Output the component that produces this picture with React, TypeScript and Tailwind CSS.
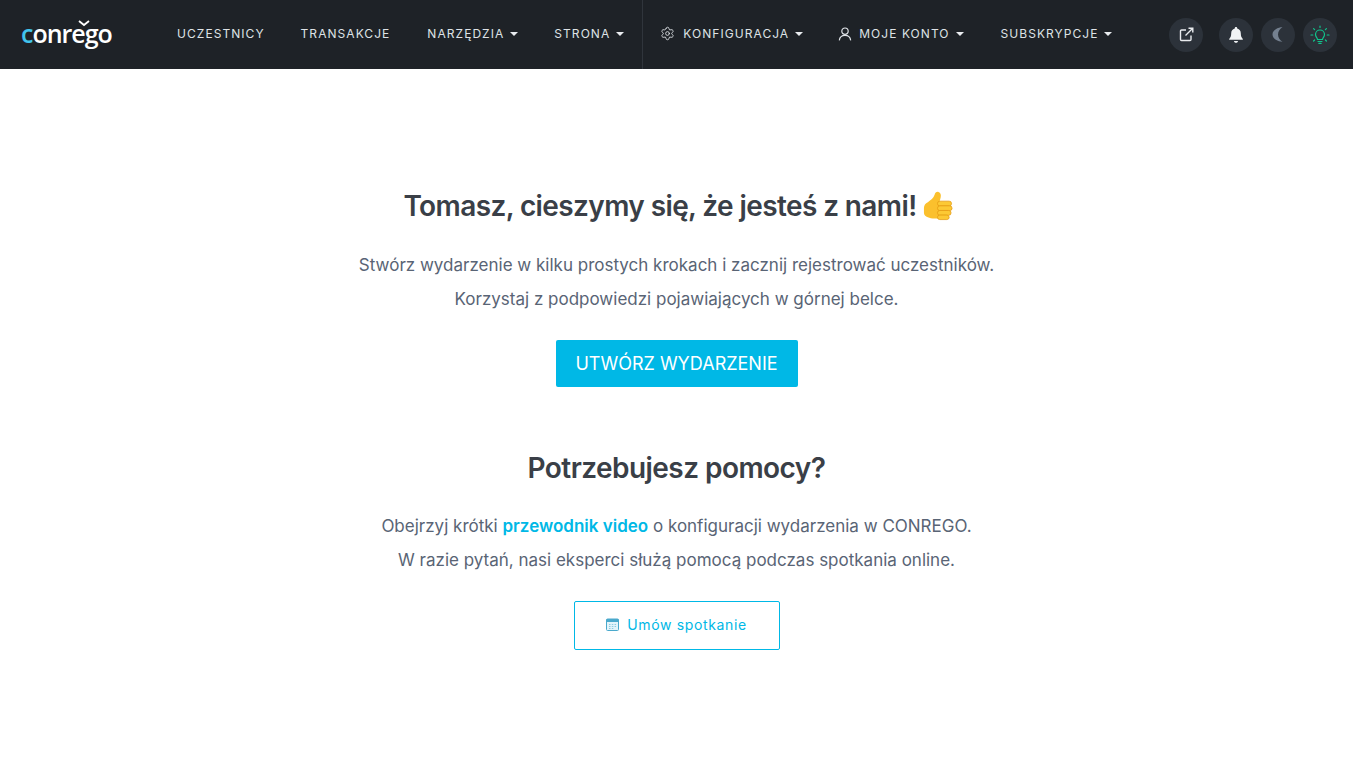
import React from 'react';
import { Settings } from 'lucide-react';

function Caret() {
  return <span className="ml-[6px] inline-block border-x-[4px] border-t-[4px] border-x-transparent border-t-[#e9ecef]" />;
}

function NavItem({ label, caret, icon, className }: { label: string; caret?: boolean; icon?: React.ReactNode; className?: string }) {
  return (
    <a className={`flex items-center pb-[2px] text-[12px] font-normal tracking-[1.05px] text-[#dee2e6] ${className || ''}`}>
      {icon}
      <span>{label}</span>
      {caret && <Caret />}
    </a>
  );
}

function RoundButton({ children, className }: { children: React.ReactNode; className?: string }) {
  return (
    <button className={`flex h-[34px] w-[34px] items-center justify-center rounded-full bg-[#2c323a] ${className || ''}`}>
      {children}
    </button>
  );
}

function ThumbsUp() {
  return (
    <svg width="31" height="32" viewBox="0 0 32 32" className="ml-[5px]">
      <path d="M2 18c0-3 1.500-4.500 4-6 3-2 6-4 7-7.500C13.500 2.500 15 1 17 1.500c2.300.6 2.800 3 2.300 5.500L18 12v17h-5c-3 0-5-1-7-1.500-2.500-.6-4-2-4-4.500z" fill="#fbc02d" />
      <rect x="16" y="11" width="14.500" height="5" rx="2.500" fill="#fcc934" stroke="#e59a12" strokeWidth="0.800" />
      <rect x="16" y="15.800" width="15" height="5" rx="2.500" fill="#fcc934" stroke="#e59a12" strokeWidth="0.800" />
      <rect x="16" y="20.600" width="14" height="5" rx="2.500" fill="#fcc934" stroke="#e59a12" strokeWidth="0.800" />
      <rect x="16" y="25.400" width="12" height="4.600" rx="2.300" fill="#fcc934" stroke="#e59a12" strokeWidth="0.800" />
    </svg>
  );
}

export default function App() {
  return (
    <div className="min-h-[772px] bg-white font-['Inter',sans-serif]">
      {/* górny pasek */}
      <header className="flex h-[69px] items-center bg-[#1e2227] pl-[21px] pr-[16px]">
        <div className="relative flex w-[156px] items-center">
          <span className="pb-[2px] font-['Open_Sans',sans-serif] text-[25px] font-semibold leading-none tracking-[-1px] text-white">
            <span className="text-[#41c4ec]">c</span>onrego
          </span>
          <svg width="12" height="7" viewBox="0 0 12 7" className="absolute left-[57px] top-[-1px]">
            <path d="M1 1l5 4 5-4" stroke="#fff" strokeWidth="1.800" fill="none" />
          </svg>
        </div>
        <nav className="flex h-full items-center">
          <NavItem label="UCZESTNICY" className="mr-[36px]" />
          <NavItem label="TRANSAKCJE" className="mr-[37px]" />
          <NavItem label="NARZĘDZIA" caret className="mr-[36px]" />
          <NavItem label="STRONA" caret className="mr-[18px]" />
          <div className="mr-[17px] h-full w-px bg-[#30353c]" />
          <NavItem label="KONFIGURACJA" caret className="mr-[35px]" icon={<Settings size={15} strokeWidth={1.4} className="mr-[8px]" />} />
          <NavItem
            label="MOJE KONTO"
            caret
            className="mr-[37px]"
            icon={
              <svg width="14" height="14" viewBox="0 0 14 14" fill="none" stroke="currentColor" strokeWidth="1.200" className="mr-[7px]">
                <circle cx="7" cy="4.200" r="3.200" />
                <path d="M1.300 13.300c.4-3 2.600-5 5.700-5s5.300 2 5.700 5" />
              </svg>
            }
          />
          <NavItem label="SUBSKRYPCJE" caret />
        </nav>
        <div className="ml-auto flex items-center">
          <RoundButton className="mr-[16px]">
            <svg width="15" height="15" viewBox="0 0 15 15" fill="none" stroke="#e9ecef" strokeWidth="1.400">
              <path d="M7 3H2.500A1 1 0 0 0 1.500 4v8.500a1 1 0 0 0 1 1H11a1 1 0 0 0 1-1V8.500" />
              <path d="M9.500 1.200h4.300v4.300M13.500 1.500L6.500 8.500" />
            </svg>
          </RoundButton>
          <RoundButton className="mr-[8px]">
            <svg width="14" height="16" viewBox="0 0 14 16" fill="#f1f3f5">
              <path d="M7 0c.7 0 1.200.5 1.200 1.200v.4C10.500 2.200 11.800 4 11.800 6.300c0 3 .7 4.200 2 5.700.2.300 0 .8-.4.800H.6c-.4 0-.6-.5-.4-.8 1.300-1.500 2-2.700 2-5.700C2.200 4 3.500 2.200 5.800 1.600v-.4C5.800.5 6.300 0 7 0z" />
              <path d="M5 14h4c0 1-.9 1.800-2 1.800S5 15 5 14z" />
            </svg>
          </RoundButton>
          <RoundButton className="mr-[8px]">
            <svg width="12" height="15" viewBox="0 0 12 15" fill="#74808f">
              <path d="M10.500 0.300C6 .3 .5 3 .5 7.500s5.500 7.200 10 7.200c-2.500-1.500-4.500-4-4.500-7.200S8 1.800 10.500.3z" />
            </svg>
          </RoundButton>
          <RoundButton>
            <svg width="20" height="20" viewBox="0 0 20 20" fill="none" stroke="#10c48c" strokeWidth="1.200" strokeLinecap="round">
              <path d="M10 1v1.500M3.600 3.600l1 1M16.400 3.600l-1 1M1 10h1.800M17.200 10H19M4.600 15l-1 1M15.400 15l1 1" />
              <path d="M7.500 14.500c0-1.500-2-2.400-2-5A4.500 4.500 0 0 1 14.500 9.500c0 2.600-2 3.500-2 5z" />
              <path d="M8 16.500h4M8.800 18.300h2.400" />
            </svg>
          </RoundButton>
        </div>
      </header>

      <main className="flex flex-col items-center pt-[117px] text-center text-[17px] leading-[34px] text-[#596475]">
        <h1 className="flex h-[40px] items-center pl-[3px] text-[28px] font-semibold leading-[40px] tracking-[-0.6px] text-[#3a3f47]">
          Tomasz, cieszymy się, że jesteś z nami!
          <ThumbsUp />
        </h1>
        <p className="mt-[22px]">Stwórz wydarzenie w kilku prostych krokach i zacznij rejestrować uczestników.</p>
        <p>Korzystaj z podpowiedzi pojawiających w górnej belce.</p>
        <button className="mt-[24px] flex h-[47px] w-[242px] items-center justify-center rounded-[2px] bg-[#00b8e6] text-[18px] font-normal text-white">
          UTWÓRZ WYDARZENIE
        </button>
        <h2 className="mt-[61px] text-[28px] font-semibold leading-[40px] tracking-[-0.55px] text-[#3a3f47]">Potrzebujesz pomocy?</h2>
        <p className="mt-[21px]">
          Obejrzyj krótki <a className="font-semibold text-[#00b8e6]">przewodnik video</a> o konfiguracji wydarzenia w CONREGO.
        </p>
        <p>W razie pytań, nasi eksperci służą pomocą podczas spotkania online.</p>
        <button className="mt-[24px] flex h-[49px] w-[206px] items-center justify-center rounded-[2px] border border-[#00b8e6] pb-[2px] text-[14px] leading-none tracking-[0.65px] text-[#00b8e6]">
          <svg width="13" height="13" viewBox="0 0 13 13" className="mr-[8px]">
            <rect x="0.500" y="1" width="12" height="11.500" rx="1" fill="#e3f4fa" stroke="#4aa9cc" />
            <rect x="0.500" y="1" width="12" height="3" fill="#4aa9cc" />
            <path d="M3 6.500h1.500M5.800 6.500h1.500M8.600 6.500h1.500M3 8.500h1.500M5.800 8.500h1.500M8.600 8.500h1.500M3 10.500h1.500M5.800 10.500h1.500" stroke="#8ccbe2" />
          </svg>
          Umów spotkanie
        </button>
      </main>
    </div>
  );
}
